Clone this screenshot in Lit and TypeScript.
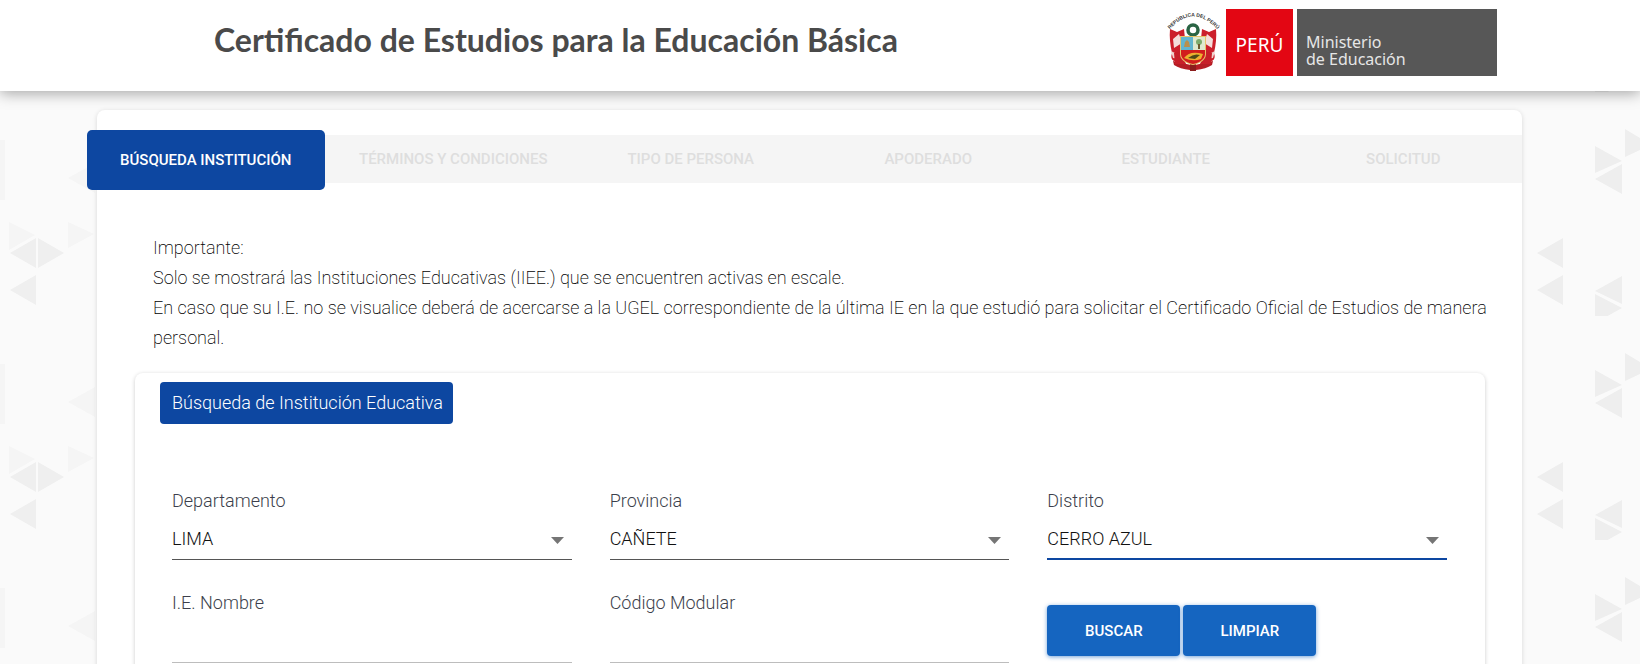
import { LitElement, html, css, svg } from "lit";
import { customElement } from "lit/decorators.js";

@customElement("gov-logo")
class GovLogo extends LitElement {
  static styles = css`
    :host { display: flex; align-items: stretch; height: 67px; font-family: "Noto Sans", sans-serif; color: #fff; }
    .crest { width: 58px; height: 67px; overflow: visible; }
    .motto { font: 700 5px "Liberation Sans", sans-serif; fill: #333; }
    .peru { background: #e30613; width: 67px; display: flex; align-items: center; justify-content: center; font-size: 19px; line-height: 22px; padding-top: 4px; box-sizing: border-box; }
    .ministry { background: #575757; width: 200px; margin-left: 4px; box-sizing: border-box; padding: 25px 9px 0; font-size: 16px; line-height: 17px; color: #e6e6e6; }
  `;
  render() {
    return html`
      <svg class="crest" viewBox="0 0 58 67" role="img" aria-label="Escudo del Perú">
        <defs><path id="arc" d="M1 21 Q25 -6 50 21" /></defs>
        <text class="motto"><textPath href="#arc" startOffset="50%" text-anchor="middle">REPÚBLICA DEL PERÚ</textPath></text>
        <path d="M2 20 L9 23 L16 20 L19 50 L6 52 Q2 50 4 44 Q1 31 2 20 Z M48 20 L41 23 L34 20 L31 50 L44 52 Q48 50 46 44 Q49 31 48 20 Z" fill="#cc1f2b" />
        <path d="M5 30 L11 25 L14 34 L6 39 Z M45 30 L39 25 L36 34 L44 39 Z" fill="#f4dedb" />
        <path d="M3 42 L11 46 L12 50 L5 49 Z M47 42 L39 46 L38 50 L45 49 Z" fill="#efd3cf" />
        <path d="M5 52 Q14 54 23 56 L22 61 Q12 60 6 56 Z M45 52 Q36 54 27 56 L28 61 Q38 60 44 56 Z" fill="#b51d25" />
        <path d="M22 54 h6 v8 h-6z" fill="#8c1d1d" />
        <path d="M6 44 L13 42 L18 55 L7 55 Z M44 44 L37 42 L32 55 L43 55 Z" fill="#c71f29" />
        <circle cx="25" cy="21" r="5" fill="#fff" stroke="#2a6444" stroke-width="3.5" />
        <path d="M12 27 H38 V43 Q39 53 25 56 Q11 53 12 43 Z" fill="#e8c36a" />
        <path d="M13 28 H25 V41 H13 Z" fill="#62b5cf" />
        <path d="M25 28 H37 V41 H25 Z" fill="#dfe9cf" />
        <path d="M13 41 H37 V43 Q38 52 25 55 Q12 52 13 43 Z" fill="#d21d1d" />
        <path d="M16 38 L17 33 L19 31 L21 33 L22 38 Z" fill="#bb8f4a" />
        <circle cx="31" cy="33" r="3" fill="#7dab6d" />
        <path d="M30 35 h2 v5 h-2z" fill="#6b5b2e" />
        <path d="M16 49 Q22 41 35 45 L33 50 Q25 53 16 49 Z" fill="#edb02f" />
        <path d="M20 49 Q26 44 32 46 L27 50 Z" fill="#4f4a16" />
      </svg>
      <div class="peru">PERÚ</div>
      <div class="ministry">Ministerio<br />de Educación</div>
    `;
  }
}

const departments = ["LIMA"];
const provinces = ["CAÑETE"];
const districts = ["CERRO AZUL"];

@customElement("app-root")
class AppRoot extends LitElement {
  static styles = css`
    :host { display: block; font-family: Roboto, sans-serif; color: #212121; }
    * { box-sizing: border-box; }
    .page {
      min-height: 100vh; display: flex; flex-direction: column; overflow: hidden;
      background:
        url("data:image/svg+xml,%3Csvg xmlns='http://www.w3.org/2000/svg' width='97' height='224'%3E%3Cg fill='%23efefef'%3E%3Cpath d='M10 161l26-15v30zM38 146l26 15-26 15zM10 198l26-15v30z'/%3E%3C/g%3E%3Cg fill='%23f5f5f5'%3E%3Cpath d='M68 86l27-15v30zM68 130l26 12-26 14zM0 48h5v60H0zM9 130l26 13-26 15z'/%3E%3C/g%3E%3C/svg%3E") 0 92px repeat-y,
        url("data:image/svg+xml,%3Csvg xmlns='http://www.w3.org/2000/svg' width='118' height='224'%3E%3Cg fill='%23eeeeee'%3E%3Cpath d='M15 161l26-15v30zM15 198l26-15v30zM73 54l27 15-27 12zM73 87l27-15v30zM103 37l15 9v12l-15 7zM73 199l27-15v28zM73 202l27 14-27 15z'/%3E%3C/g%3E%3C/svg%3E") right 92px repeat-y,
        #fafafa;
    }
    .header {
      height: 91px; flex: none; background: #fff; display: flex; justify-content: space-between; align-items: flex-start;
      padding: 9px 143px 0 214px; box-shadow: 0 2px 14px rgba(0, 0, 0, 0.36); z-index: 1;
    }
    .title { margin: 0; font: 700 32px/62px "Century Gothic", Lato, sans-serif; color: #4a4a4a; }
    .card {
      flex: 1; margin: 19px 118px 0 97px; padding-top: 20px; background: #fff; border-radius: 8px 8px 0 0;
      box-shadow: 0 1px 5px rgba(0, 0, 0, 0.14);
    }
    .tabs { display: grid; grid-template-columns: repeat(6, 1fr); align-items: center; height: 60px; background: linear-gradient(#f5f5f5, #f5f5f5) 0 5px / 100% 48px no-repeat; }
    .tab { border: 0; background: none; height: 48px; font: 500 15px Roboto, sans-serif; color: #dedede; padding: 0; margin-bottom: 2px; }
    .tab.active { height: 60px; margin: 0 10px 0 -10px; width: 100%; background: #0d47a1; color: #fff; border-radius: 5px; }
    .notice { margin: 43px 32px 0 56px; font-weight: 160; font-size: 18px; line-height: 30px; color: #000; }
    .notice p { margin: 0; }
    .panel { margin: 20px 37px 0 38px; padding: 9px 0 40px 25px; border-radius: 8px; box-shadow: 0 1px 4px rgba(0, 0, 0, 0.2); }
    .legend { display: inline-block; margin: 0; padding: 0 10px 0 12px; background: #0d47a1; color: #fff; border-radius: 4px; font-weight: 280; font-size: 18px; line-height: 42px; }
    .fields { display: grid; grid-template-columns: repeat(3, 1fr); column-gap: 38px; padding: 62px 38px 0 12px; }
    .field { display: flex; flex-direction: column; height: 102px; }
    .label { font-size: 18px; line-height: 30px; color: #3c3f4c; font-weight: 360; }
    .select, .input { appearance: none; width: 100%; height: 44px; border: 0; border-bottom: 1px solid #555; border-radius: 0; padding: 1px 32px 0 0; font: 360 18px Roboto, sans-serif; color: #111; outline: none; background: none; }
    .input { border-color: #bdbdbd; height: 45px; padding: 0; }
    .select.current { border-color: #0d47a1; box-shadow: inset 0 -1px #0d47a1; }
    .wrap { display: grid; align-items: center; }
    .wrap > * { grid-area: 1 / 1; }
    .arrow { justify-self: end; width: 13px; height: 7px; margin: 4px 8px 0 0; pointer-events: none; fill: #757575; }
    .actions { display: flex; gap: 3px; padding-top: 17px; }
    .button { height: 51px; width: 133px; border: 0; border-radius: 4px; background: #1565c0; color: #fff; font: 500 15px Roboto, sans-serif; box-shadow: 0 1px 4px rgba(21, 101, 192, 0.6); }
  `;

  private selectField(id: string, label: string, options: string[], current = false) {
    return html`<div class="field">
      <label class="label" for=${id}>${label}</label>
      <div class="wrap">
        <select id=${id} class="select ${current ? "current" : ""}">${options.map((o) => html`<option>${o}</option>`)}</select>
        <svg class="arrow" viewBox="0 0 13 7">${svg`<path d="M0 0h13L6.500 7z"/>`}</svg>
      </div>
    </div>`;
  }

  private textField(id: string, label: string) {
    return html`<div class="field"><label class="label" for=${id}>${label}</label><input id=${id} class="input" type="text" /></div>`;
  }

  render() {
    const tabs = ["BÚSQUEDA INSTITUCIÓN", "TÉRMINOS Y CONDICIONES", "TIPO DE PERSONA", "APODERADO", "ESTUDIANTE", "SOLICITUD"];
    return html`<div class="page">
      <header class="header">
        <h1 class="title">Certificado de Estudios para la Educación Básica</h1>
        <gov-logo></gov-logo>
      </header>
      <main class="card">
        <nav class="tabs">${tabs.map((t, i) => html`<button class="tab ${i === 0 ? "active" : ""}">${t}</button>`)}</nav>
        <section class="notice">
          <p>Importante:</p>
          <p>Solo se mostrará las Instituciones Educativas (IIEE.) que se encuentren activas en escale.</p>
          <p>En caso que su I.E. no se visualice deberá de acercarse a la UGEL correspondiente de la última IE en la que estudió para solicitar el Certificado Oficial de Estudios de manera personal.</p>
        </section>
        <section class="panel">
          <h2 class="legend">Búsqueda de Institución Educativa</h2>
          <form class="fields" @submit=${(e: Event) => e.preventDefault()}>
            ${this.selectField("departamento", "Departamento", departments)}
            ${this.selectField("provincia", "Provincia", provinces)}
            ${this.selectField("distrito", "Distrito", districts, true)}
            ${this.textField("nombre", "I.E. Nombre")}
            ${this.textField("codigo", "Código Modular")}
            <div class="actions"><button class="button" type="submit">BUSCAR</button><button class="button" type="reset">LIMPIAR</button></div>
          </form>
        </section>
      </main>
    </div>`;
  }
}
